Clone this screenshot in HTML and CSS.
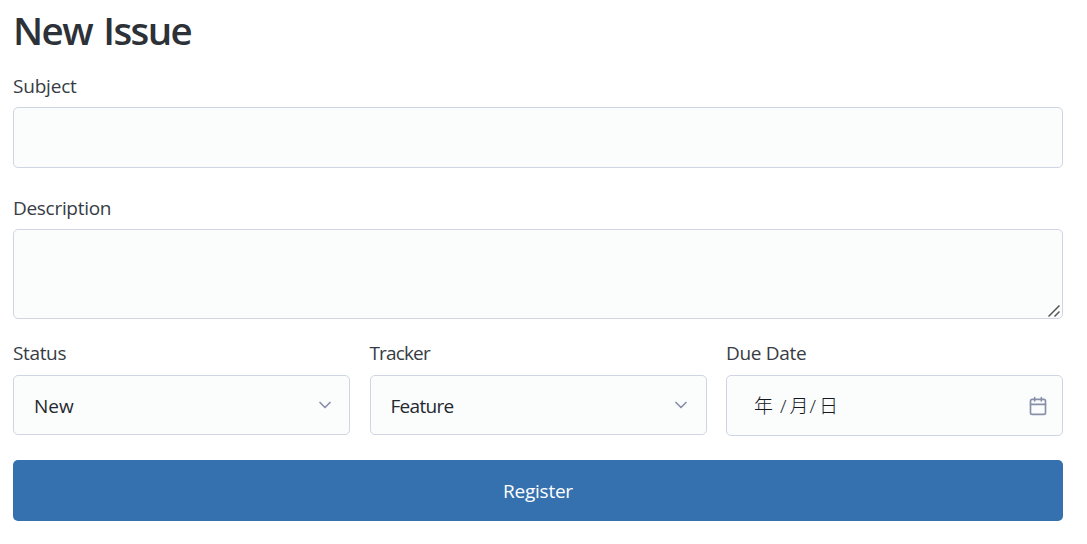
FILE: index.html
```html
<!DOCTYPE html>
<html lang="en">
<head>
<meta charset="utf-8">
<title>New Issue</title>
<link rel="stylesheet" href="styles.css">
</head>
<body>
<main class="page">
  <h1 class="title">New Issue</h1>
  <form class="form">
    <div class="field">
      <label class="label label-subject" for="subject">Subject</label>
      <input class="control" id="subject" type="text">
    </div>
    <div class="field">
      <label class="label label-description" for="description">Description</label>
      <div class="area-wrap">
        <textarea class="control area" id="description"></textarea>
        <svg class="grip" width="12" height="12" viewBox="0 0 12 12"><path d="M0.5 11.5L11.5 0.5M6.5 11.5L11.5 6.5"/></svg>
      </div>
    </div>
    <div class="row">
      <div class="field">
        <div class="label label-status">Status</div>
        <div class="control select"><span class="value">New</span>
          <svg class="chevron" width="20" height="20" viewBox="0 0 24 24"><polyline points="6 9 12 15 18 9"/></svg>
        </div>
      </div>
      <div class="field">
        <div class="label label-tracker">Tracker</div>
        <div class="control select select-tracker"><span class="value value-feature">Feature</span>
          <svg class="chevron" width="20" height="20" viewBox="0 0 24 24"><polyline points="6 9 12 15 18 9"/></svg>
        </div>
      </div>
      <div class="field">
        <div class="label label-date">Due Date</div>
        <div class="control date">
          <span class="date-parts"><span class="year">年</span><span class="slash">/</span><span class="month">月</span><span class="slash">/</span><span>日</span></span>
          <svg class="calendar" width="20" height="20" viewBox="0 0 24 24"><rect x="3" y="4" width="18" height="18" rx="2"/><path d="M16 2v4M8 2v4M3 10h18"/></svg>
        </div>
      </div>
    </div>
    <button class="submit" type="button">Register</button>
  </form>
</main>
</body>
</html>
```
FILE: styles.css
```css
* { box-sizing: border-box; }

body {
  margin: 0;
  background: #fff;
  color: #373c44;
  font-family: "Open Sans", "Noto Sans CJK JP", sans-serif;
  font-size: 19px;
  line-height: 30px;
}

.page {
  width: 1076px;
  padding: 5px 13px 0;
}

.title {
  margin: 0 0 16px;
  color: #2d3138;
  font-size: 38.5px;
  font-weight: 600;
  line-height: 50px;
  letter-spacing: -1.6px;
  word-spacing: 3px;
}

.form {
  display: flex;
  flex-direction: column;
}

.field { display: flex; flex-direction: column; }
.field + .field { margin-top: 25px; }

.label {
  height: 30px;
  margin-bottom: 6px;
}

.label-subject { letter-spacing: -0.2px; }
.label-description { letter-spacing: -0.3px; }
.label-status { letter-spacing: -0.35px; }
.label-tracker { letter-spacing: -0.85px; }
.label-date { letter-spacing: -0.3px; }

.control {
  display: block;
  width: 100%;
  height: 61px;
  margin: 0;
  padding: 0 20px;
  border: 1px solid #cfd5e2;
  border-radius: 5px;
  background: #fbfcfc;
  color: #24282f;
  font: inherit;
  outline: none;
}

.area-wrap { position: relative; }
.area { height: 90px; resize: none; }

.grip {
  position: absolute;
  right: 3px;
  bottom: 2px;
  fill: none;
  stroke: #555;
  stroke-width: 1.5;
}

.row {
  display: grid;
  grid-template-columns: repeat(3, 337px);
  justify-content: space-between;
  margin-top: 19px;
}

.row .field { margin-top: 0; }
.row .label { margin-bottom: 7px; }

.select, .date {
  display: flex;
  align-items: center;
  justify-content: space-between;
}

.select { height: 60px; padding-right: 14px; }
.select .chevron { margin-bottom: 1px; }
.select-tracker { padding-right: 15px; }
.value { padding-top: 2px; }
.value-feature { letter-spacing: -0.7px; }
.date { padding: 0 14px 0 27px; color: #15181e; }

.chevron, .calendar {
  fill: none;
  stroke: #888fa8;
  stroke-width: 2;
  stroke-linecap: round;
  stroke-linejoin: round;
}

.date-parts { display: flex; font-weight: 300; }
.year { width: 26px; }
.month { width: 20px; }
.slash { width: 9.5px; }

.submit {
  height: 61px;
  margin: 24px 0 0;
  padding: 0;
  border: 0;
  border-radius: 5px;
  background: #3571af;
  color: #fff;
  font: inherit;
  letter-spacing: -0.25px;
}
```
